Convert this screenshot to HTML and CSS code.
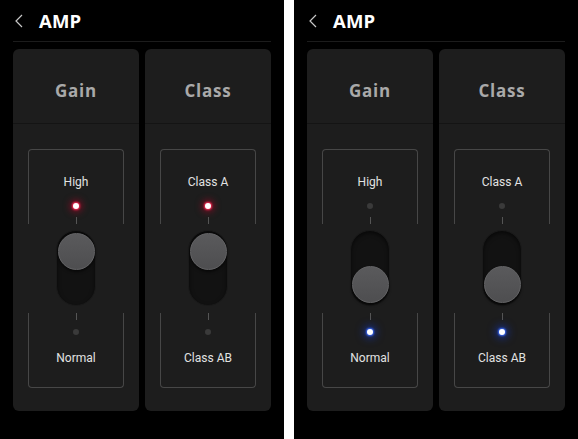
FILE: index.html
```html
<!DOCTYPE html>
<html lang="en">
<head>
  <meta charset="UTF-8">
  <meta name="viewport" content="width=device-width, initial-scale=1.0">
  <title>AMP</title>
  <link rel="stylesheet" href="styles.css">
</head>
<body>

  <div class="page">

    <!-- SCREEN 1: switches up -->
    <div class="screen">
      <div class="topbar">
        <svg class="back" width="8" height="14" viewBox="0 0 8 14"><path d="M7 1 L1 7 L7 13" fill="none" stroke="#c8c8c8" stroke-width="1.2"/></svg>
        <span class="title">AMP</span>
      </div>
      <div class="cards">
        <div class="card">
          <div class="card-head">Gain</div>
          <div class="card-body">
            <div class="box box-top">
              <span class="label">High</span>
              <span class="led led-red"></span>
              <span class="tick"></span>
            </div>
            <div class="switch">
              <div class="track up"><div class="knob"></div></div>
            </div>
            <div class="box box-bottom">
              <span class="tick"></span>
              <span class="led"></span>
              <span class="label">Normal</span>
            </div>
          </div>
        </div>
        <div class="card">
          <div class="card-head">Class</div>
          <div class="card-body">
            <div class="box box-top">
              <span class="label">Class A</span>
              <span class="led led-red"></span>
              <span class="tick"></span>
            </div>
            <div class="switch">
              <div class="track up"><div class="knob"></div></div>
            </div>
            <div class="box box-bottom">
              <span class="tick"></span>
              <span class="led"></span>
              <span class="label">Class AB</span>
            </div>
          </div>
        </div>
      </div>
    </div>

    <!-- SCREEN 2: switches down -->
    <div class="screen">
      <div class="topbar">
        <svg class="back" width="8" height="14" viewBox="0 0 8 14"><path d="M7 1 L1 7 L7 13" fill="none" stroke="#c8c8c8" stroke-width="1.2"/></svg>
        <span class="title">AMP</span>
      </div>
      <div class="cards">
        <div class="card">
          <div class="card-head">Gain</div>
          <div class="card-body">
            <div class="box box-top">
              <span class="label">High</span>
              <span class="led"></span>
              <span class="tick"></span>
            </div>
            <div class="switch">
              <div class="track down"><div class="knob"></div></div>
            </div>
            <div class="box box-bottom">
              <span class="tick"></span>
              <span class="led led-blue"></span>
              <span class="label">Normal</span>
            </div>
          </div>
        </div>
        <div class="card">
          <div class="card-head">Class</div>
          <div class="card-body">
            <div class="box box-top">
              <span class="label">Class A</span>
              <span class="led"></span>
              <span class="tick"></span>
            </div>
            <div class="switch">
              <div class="track down"><div class="knob"></div></div>
            </div>
            <div class="box box-bottom">
              <span class="tick"></span>
              <span class="led led-blue"></span>
              <span class="label">Class AB</span>
            </div>
          </div>
        </div>
      </div>
    </div>

  </div>

</body>
</html>
```

FILE: styles.css
```css
* {
  box-sizing: border-box;
}

body {
  margin: 0;
  padding: 0;
  background: #fff;
  font-family: Roboto, "Liberation Sans", sans-serif;
}

.page {
  display: flex;
  gap: 10px;
  width: 578px;
  height: 439px;
}

.screen {
  width: 284px;
  height: 439px;
  background: #000;
  padding: 0 13px;
}

/* header */
.topbar {
  height: 42px;
  display: flex;
  align-items: center;
  padding-left: 2px;
  border-bottom: 1px solid #1c1c1c;
}

.back {
  display: block;
  margin-right: 16px;
}

.title {
  color: #fff;
  font-family: "Open Sans", sans-serif;
  font-weight: 700;
  font-size: 18.5px;
  letter-spacing: 0.2px;
}

/* cards */
.cards {
  display: flex;
  gap: 6px;
  margin-top: 7px;
}

.card {
  width: 126px;
  height: 362px;
  background: #1d1d1d;
  border-radius: 6px;
}

.card-head {
  height: 75px;
  border-bottom: 1px solid #141414;
  text-align: center;
  line-height: 74px;
  padding-top: 5px;
  color: #a9a9a9;
  font-family: "Open Sans", sans-serif;
  font-weight: 700;
  font-size: 17px;
  letter-spacing: 0.8px;
}

.card-body {
  padding: 25px 15px 0;
}

.box {
  height: 75px;
  display: flex;
  flex-direction: column;
  align-items: center;
  border: 1px solid #474747;
}

.box-top {
  border-bottom: none;
  border-radius: 4px 4px 0 0;
  padding-top: 25px;
}

.box-bottom {
  border-top: none;
  border-radius: 0 0 4px 4px;
}

.label {
  color: #e2e2e2;
  font-size: 12px;
  line-height: 14px;
}

.tick {
  width: 1px;
  height: 7px;
  background: #555;
}

.box-top .tick {
  margin-top: auto;
}

.box-top .led {
  margin-top: 14px;
}

.box-bottom .led {
  margin-top: 9px;
}

.box-bottom .label {
  margin-top: 16px;
}

.led {
  width: 6px;
  height: 6px;
  border-radius: 50%;
  background: #3a3a3a;
}

.led-red {
  background: #fff;
  box-shadow: 0 0 2px 1px #ff2a55, 0 0 7px 3px rgba(190, 0, 40, 0.6);
}

.led-blue {
  background: #fff;
  box-shadow: 0 0 2px 1px #3a6bff, 0 0 8px 3px rgba(20, 60, 210, 0.65);
}

/* toggle */
.switch {
  height: 89px;
  display: flex;
  justify-content: center;
  padding-top: 6px;
}

.track {
  width: 40px;
  height: 76px;
  border-radius: 20px;
  background: #121212;
  border: 1px solid #1a1a1a;
  box-shadow: inset 0 2px 4px rgba(0, 0, 0, 0.6);
  display: flex;
  flex-direction: column;
  align-items: center;
  padding: 2px 0;
}

.track.down {
  justify-content: flex-end;
}

.knob {
  width: 37px;
  height: 37px;
  border-radius: 50%;
  background: linear-gradient(#5a5a5c, #4e4e50);
  border: 1px solid #646466;
  box-shadow: 0 2px 3px rgba(0, 0, 0, 0.6);
}
```
